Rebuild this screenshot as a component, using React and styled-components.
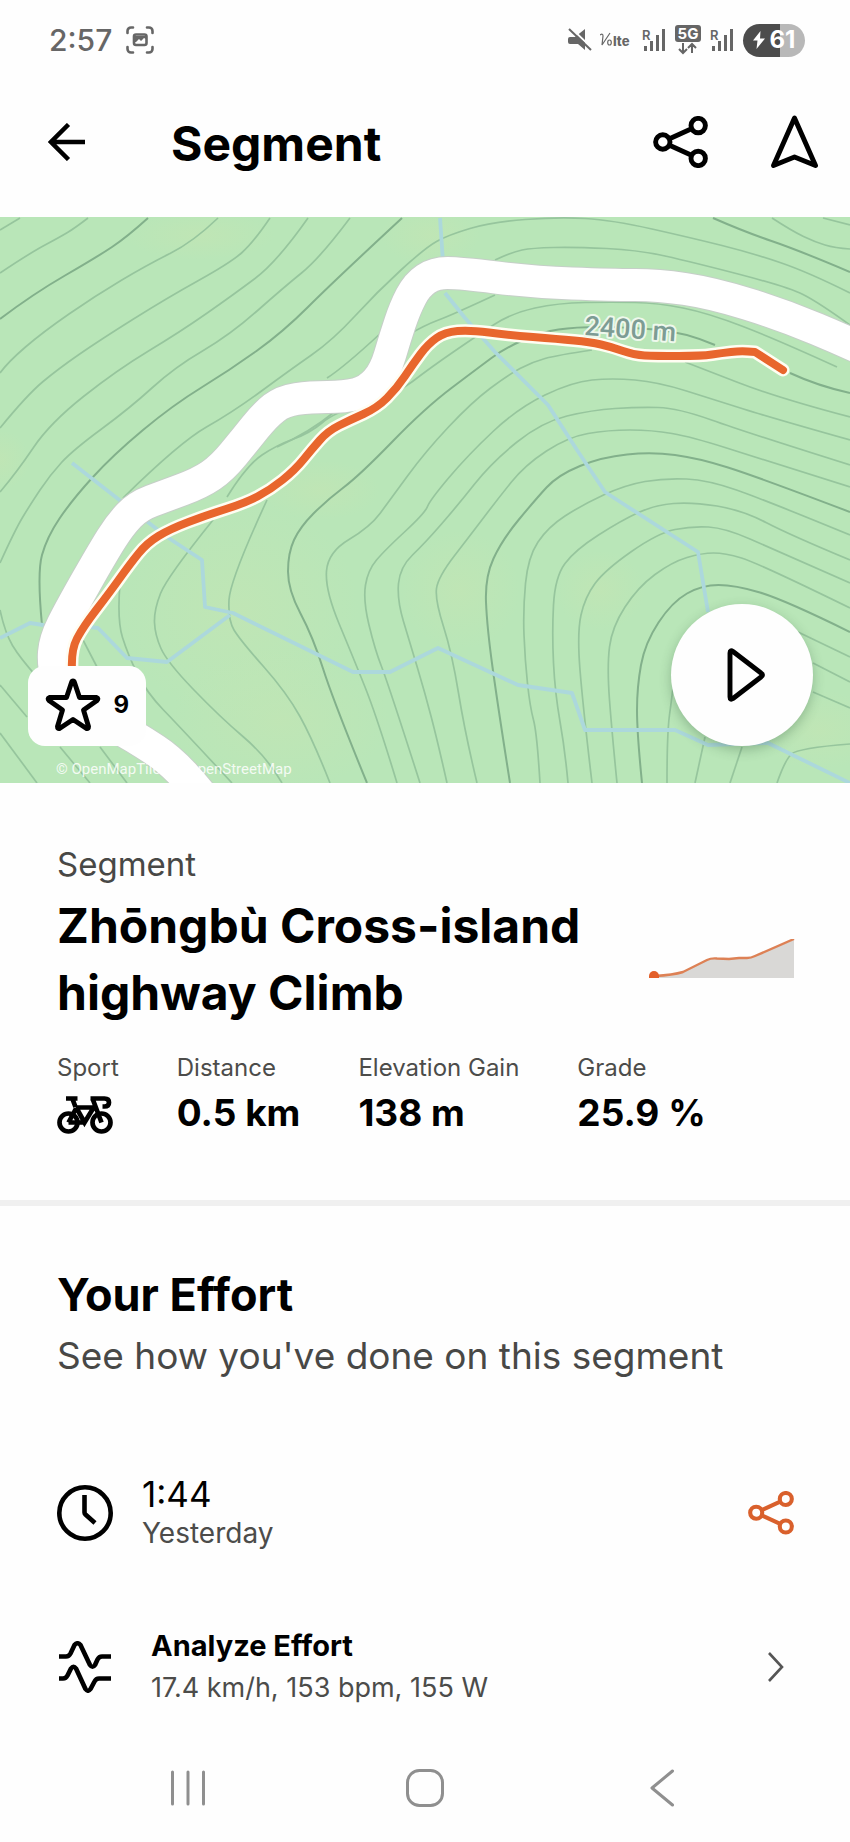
import React from "react";
import styled, { createGlobalStyle } from "styled-components";

const GlobalStyle = createGlobalStyle`
  * { box-sizing: border-box; }
  body {
    margin: 0;
    background: #fefefe;
    color: #000;
    font-family: Inter, "Liberation Sans", sans-serif;
  }
  h1, h2, p, dl, dd, dt { margin: 0; }
  svg { display: block; }
`;

const Screen = styled.div`
  min-height: 100vh;
  display: flex;
  flex-direction: column;
`;

/* Status bar */
const StatusBar = styled.div`
  height: 80px;
  padding: 0 45px 0 49px;
  display: flex;
  align-items: center;
  justify-content: space-between;
  color: #666;
`;
const StatusGroup = styled.div`
  display: flex;
  align-items: center;
  gap: ${(p) => p.$gap}px;
`;
const Clock = styled.span`
  font-size: 30px;
  line-height: 36px;
  font-weight: 500;
`;
const Battery = styled.span`
  width: 62px;
  height: 33px;
  border-radius: 17px;
  background: linear-gradient(90deg, #4c4c4c 60%, #b8b8b8 60%);
  color: #fff;
  display: flex;
  align-items: center;
  justify-content: center;
  gap: 5px;
  font-size: 24px;
  line-height: 32px;
  font-weight: 700;
`;

/* App header */
const Header = styled.header`
  height: 137px;
  padding: 0 31px 13px 48px;
  display: flex;
  align-items: center;
`;
const HeaderTitle = styled.h1`
  flex: 1;
  margin-left: 85px;
  padding-top: 4px;
  font-size: 48px;
  line-height: 60px;
  font-weight: 700;
`;
const IconButton = styled.button`
  border: 0;
  padding: 0;
  background: none;
  color: ${(p) => p.$color || "#000"};
  cursor: pointer;
  display: block;
  flex: none;
`;
const HeaderActions = styled.div`
  display: flex;
  align-items: center;
  gap: 62px;
`;

/* Map */
const MapPanel = styled.section`
  position: relative;
  aspect-ratio: 850 / 566;
  overflow: hidden;
  background: #b9e6b8;
`;
const MapDrawing = styled.svg`
  width: 100%;
  height: 100%;
`;
const StarBadge = styled.button`
  position: absolute;
  left: 28px;
  bottom: 37px;
  width: 118px;
  height: 80px;
  padding: 0 17px 2px;
  border: 0;
  border-radius: 17px;
  background: #fefefe;
  display: flex;
  align-items: center;
  justify-content: space-between;
  font: 700 24px/32px Inter, sans-serif;
  color: #000;
`;
const PlayButton = styled.button`
  position: absolute;
  right: 37px;
  bottom: 37px;
  width: 142px;
  height: 142px;
  padding: 0 0 0 8px;
  border: 0;
  border-radius: 50%;
  background: #fefefe;
  color: #000;
  box-shadow: 0 4px 12px rgba(40, 80, 50, 0.3);
  display: flex;
  align-items: center;
  justify-content: center;
`;
const Attribution = styled.small`
  position: absolute;
  left: 56px;
  bottom: 4px;
  font: 400 15px/20px Roboto, sans-serif;
  color: rgba(255, 255, 255, 0.85);
`;

/* Segment details */
const Details = styled.section`
  padding: 61px 55px 65px 57px;
  border-bottom: 6px solid #f0f0f0;
`;
const Kicker = styled.p`
  font-size: 33px;
  line-height: 40px;
  color: #484846;
`;
const TitleRow = styled.div`
  margin-top: 8px;
  display: flex;
  align-items: center;
  justify-content: space-between;
`;
const SegmentName = styled.h2`
  max-width: 560px;
  font-size: 48px;
  line-height: 67px;
  font-weight: 700;
`;
const Stats = styled.dl`
  margin-top: 27px;
  display: flex;
  gap: 58px;
`;
const StatLabel = styled.dt`
  font-size: 24px;
  line-height: 30px;
  color: #4c4c4a;
`;
const StatValue = styled.dd`
  margin-top: 8px;
  height: 44px;
  display: flex;
  align-items: center;
  font-size: 37px;
  line-height: 44px;
  font-weight: 700;
  white-space: pre;
`;

/* Effort */
const Effort = styled.section`
  flex: 1;
  padding: 63px 56px 24px 57px;
`;
const EffortTitle = styled.h2`
  font-size: 45px;
  line-height: 52px;
  font-weight: 700;
`;
const EffortLead = styled.p`
  margin-top: 12px;
  font-size: 37px;
  line-height: 46px;
  color: #484846;
`;
const Row = styled.div`
  margin-top: ${(p) => p.$top}px;
  display: flex;
  align-items: center;
  gap: ${(p) => p.$gap}px;
`;
const RowLink = styled(Row).attrs({ as: "a" })`
  color: inherit;
  text-decoration: none;
`;
const RowText = styled.div`
  flex: 1;
`;
const RowTime = styled.p`
  font-size: 35px;
  line-height: 40px;
`;
const RowDate = styled.p`
  font-size: 28px;
  line-height: 38px;
  color: #4c4c4a;
`;
const RowTitle = styled.p`
  font-size: 29px;
  line-height: 42px;
  font-weight: 700;
`;
const RowMeta = styled.p`
  font-size: 27px;
  line-height: 42px;
  color: #4c4c4a;
`;

/* System navigation */
const SystemNav = styled.nav`
  height: 108px;
  padding: 0 69px;
  display: grid;
  grid-template-columns: repeat(3, 1fr);
  place-items: center;
`;

const line = { fill: "none", stroke: "currentColor" };

const CaptureIcon = () => (
  <svg width="28" height="28" viewBox="0 0 28 28" {...line} strokeWidth="2.6" strokeLinecap="round" aria-hidden="true">
    <path d="M1.5 7V5a3.500 3.500 0 0 1 3.500-3.500h2M21 1.500h2a3.500 3.500 0 0 1 3.500 3.500v2M26.500 21v2a3.500 3.500 0 0 1-3.500 3.500h-2M7 26.500H5A3.500 3.500 0 0 1 1.500 23v-2" />
    <rect x="8" y="8.500" width="12.500" height="10.500" rx="2" />
    <path d="M8 10h12v3l-2-1-3 3-2-2-3 3H8z" fill="currentColor" stroke="none" />
  </svg>
);
const MuteIcon = () => (
  <svg width="24" height="24" viewBox="0 0 24 24" aria-hidden="true">
    <path d="M0 11q0-2 2-2h5l10-8v21l-7-6H2q-2 0-2-2z" fill="currentColor" />
    <path d="M3 0l22 21" stroke="#fefefe" strokeWidth="2" />
    <path d="M1 1l22 21" stroke="currentColor" strokeWidth="2" />
  </svg>
);
const VolteIcon = () => (
  <svg width="33" height="26" viewBox="0 0 33 26" fill="currentColor" aria-label="VoLTE" role="img">
    <path d="M0 8q3-2 3 1l-1 9L10 6" fill="none" stroke="currentColor" strokeWidth="1.200" />
    <ellipse cx="9.500" cy="15.500" rx="1.800" ry="2.500" fill="none" stroke="currentColor" strokeWidth="1.200" />
    <text x="13" y="19" fontFamily="Inter" fontWeight="800" fontSize="13">lte</text>
  </svg>
);
const SignalIcon = () => (
  <svg width="26" height="28" viewBox="0 0 26 28" fill="currentColor" role="img" aria-label="Roaming signal">
    <text x="1" y="14" fontFamily="Inter" fontWeight="600" fontSize="13">R</text>
    <rect x="3" y="20" width="3" height="5" />
    <rect x="9" y="15" width="3" height="10" />
    <rect x="15" y="9" width="3" height="16" />
    <rect x="21" y="3" width="3" height="22" />
  </svg>
);
const FiveGIcon = () => (
  <svg width="26" height="30" viewBox="0 0 26 30" role="img" aria-label="5G">
    <rect width="26" height="17" rx="3" fill="currentColor" />
    <text x="13" y="14" textAnchor="middle" fontFamily="Inter" fontWeight="700" fontSize="15" fill="#fff">5G</text>
    <path d="M8 18v10M4 24l4 4 4-4M17 28V19M13 23l4-4 4 4" {...line} strokeWidth="2" />
  </svg>
);
const BoltIcon = () => (
  <svg width="12" height="18" viewBox="0 0 12 18" aria-hidden="true">
    <path d="M7.500 0L0 9.500h4.500L3.500 18 12 7.500H7z" fill="currentColor" />
  </svg>
);
const BackIcon = () => (
  <svg width="38" height="38" viewBox="0 0 38 38" {...line} strokeWidth="4.500" aria-hidden="true">
    <path d="M37 19H3M20.500 1.500L3 19l17.500 17.500" />
  </svg>
);
const ShareIcon = ({ width }) => (
  <svg width={width} height={(width * 52) / 55} viewBox="0 0 55 52" {...line} strokeWidth="4.900" aria-hidden="true">
    <circle cx="9.800" cy="26" r="7.200" />
    <circle cx="45.200" cy="9.600" r="7.200" />
    <circle cx="45.200" cy="42.400" r="7.200" />
    <path d="M16.500 22.800l22-10M16.500 29.200l22 10" />
  </svg>
);
const LocateIcon = () => (
  <svg width="49" height="54" viewBox="0 0 49 54" {...line} strokeWidth="4.900" strokeLinejoin="round" aria-hidden="true">
    <path d="M24.500 3L45.500 50.500 24.500 42 3.500 50.500z" />
  </svg>
);
const StarIcon = () => (
  <svg width="56" height="54" viewBox="0 0 56 54" {...line} strokeWidth="4.900" strokeLinejoin="round" aria-hidden="true">
    <path d="M28 3q1 0 1.500 1.500L34.500 19.500h17q2.500 1 .5 3L38.500 32l5 16.500q0 2.500-2 2L28 41.500 14.500 50.500q-2 .5-2-2l5-16.500L4 22.500q-2-2 .5-3h17l5-15Q27 3 28 3z" />
  </svg>
);
const PlayIcon = () => (
  <svg width="38" height="54" viewBox="0 0 38 54" {...line} strokeWidth="4.900" strokeLinejoin="round" aria-hidden="true">
    <path d="M3 5q0-3.500 3-1.500L34 25q3 2 0 4L6 50.500Q3 52.500 3 49z" />
  </svg>
);
const BikeIcon = () => (
  <svg width="56" height="44" viewBox="0 0 56 44" {...line} strokeWidth="4.700" aria-hidden="true">
    <circle cx="11.500" cy="31.500" r="9" />
    <circle cx="44.500" cy="31.500" r="9" />
    <path d="M9 7.500h11.500M15.500 8l3 8M11.500 31.500l7.500-14M18.500 16.500h18M19.500 17L27.500 31.500 37 16M11.500 31.500h16M35.500 7.500L44.500 31.500M33.500 7.500h14q4.500 0 4.500 4t-4.500 4h-2" />
  </svg>
);
const ClockIcon = () => (
  <svg width="56" height="56" viewBox="0 0 56 56" {...line} strokeWidth="4.600" aria-hidden="true">
    <circle cx="28" cy="28" r="25.700" />
    <path d="M27.500 10v17.500q0 1 1 2L38 38" />
  </svg>
);
const AnalyzeIcon = () => (
  <svg width="56" height="52" viewBox="0 0 56 52" {...line} strokeWidth="4.600" aria-hidden="true">
    <path d="M2 15.500h7q3 0 4.500-3l4-8.500q3-3.500 6 0l9.500 20q2.500 3.500 5 0l2.500-5.500q1.500-3 4.500-3h9" />
    <path d="M2 37.500h4q3 0 4.500-3l3.500-7q2.500-3.500 5 0l9.500 20.500q2.500 3.500 5 0L37.500 40.500q1.500-3 4.500-3h12" />
  </svg>
);
const ChevronIcon = () => (
  <svg width="28" height="30" viewBox="0 0 28 30" fill="none" stroke="#555" strokeWidth="2.600" aria-hidden="true">
    <path d="M3 1l13 14L3 29" />
  </svg>
);
const RecentsIcon = () => (
  <svg width="36" height="36" viewBox="0 0 36 36" stroke="#8f8f8f" strokeWidth="3" strokeLinecap="round" aria-hidden="true">
    <path d="M2.500 2v32M18 2v32M33.500 2v32" />
  </svg>
);
const HomeIcon = () => (
  <svg width="38" height="38" viewBox="0 0 38 38" fill="none" stroke="#8f8f8f" strokeWidth="3" aria-hidden="true">
    <rect x="1.500" y="1.500" width="35" height="35" rx="12" />
  </svg>
);
const NavBackIcon = () => (
  <svg width="24" height="38" viewBox="0 0 24 38" fill="none" stroke="#8f8f8f" strokeWidth="3" strokeLinecap="round" strokeLinejoin="round" aria-hidden="true">
    <path d="M22.500 2L2 19l20.500 17" />
  </svg>
);

/* Polyline points turned into a smooth path through segment midpoints. */
const smooth = (points) => {
  const p = points.split(" ").map((s) => s.split(",").map(Number));
  if (p.length === 2) return `M${p[0]}L${p[1]}`;
  let d = `M${p[0]}`;
  for (let i = 1; i < p.length - 1; i++) {
    const last = i === p.length - 2;
    const end = last ? p[i + 1] : [(p[i][0] + p[i + 1][0]) / 2, (p[i][1] + p[i + 1][1]) / 2];
    d += `Q${p[i]} ${end}`;
  }
  return d;
};

const minorContours = [
  "0,230 10,224 20,218",
  "0,273 30,253 60,237 75,228 88,218",
  "0,373 8,362 43,332 95,296 147,265 193,242 218,218",
  "0,428 27,395 58,369 100,340 167,298 230,263 253,243 270,218",
  "0,492 17,472 50,423 117,370 180,332 233,295 277,262 308,218",
  "0,563 15,530 30,505 50,475 73,450 130,408 175,367 230,335 283,288 320,258 350,218",
  "123,498 180,442 233,412 290,370 333,340 377,292 425,248 448,235 492,222 558,217 612,220 692,238 752,253 808,272 850,293",
  "327,378 343,368 382,332",
  "495,260 512,252 532,248 575,247 638,250 692,262 788,287 818,302 850,325",
  "772,218 792,231 815,242 835,248 850,249",
  "823,218 850,225",
  "408,335 425,325 452,315 495,295",
  "227,497 247,465 277,445 310,433 335,412 395,395 430,368 478,335 512,313 558,303 612,302 658,303 708,313 778,340 837,367",
  "397,783 377,717 353,657 325,590 328,552 370,527 390,500 425,452 472,402 508,375 532,362 558,355 592,350",
  "685,362 698,367 778,398 850,417",
  "420,783 388,683 375,650 363,600 368,570 385,550 425,513 430,500 468,455 518,408 572,382 612,378 658,382 715,400 772,418 850,440",
  "447,783 438,743 425,693 410,643 397,600 400,567 425,543 458,505 492,462 542,422 592,410 638,407 678,408 745,432 850,465",
  "477,783 465,733 452,653 435,600 438,577 472,533 497,500 525,465 568,437 608,430 652,430 692,437 758,458 850,487",
  "540,783 537,733 530,707 525,660 523,610 528,557 548,527 582,505 625,485 665,478 708,480 765,500 850,535",
  "568,783 565,750 555,693 552,633 555,577 575,550 622,520 655,505 692,502 742,510 790,535 850,560",
  "592,783 583,707 577,633 585,597 605,570 658,533 692,526 725,528 775,550 850,583",
  "617,783 612,733 607,667 612,627 638,587 672,562 702,553 725,553 758,563 850,608",
  "667,783 667,733 672,697 675,670",
  "798,632 850,657",
  "695,783 705,737",
  "813,663 850,682",
  "730,783 742,747",
  "813,692 850,708",
  "777,783 785,760 798,748 850,744",
  "0,610 5,633 20,658 37,677",
  "0,685 27,717",
  "60,747 90,783",
  "0,733 37,783",
  "100,747 127,783",
  "330,783 313,740 287,693 240,640 228,620 230,580 267,500",
  "282,783 267,757 220,717 167,662 155,635 154,610 167,577 213,520",
  "120,583 117,620 128,655 147,693 180,727 232,783",
  "83,640 97,667",
  "277,447 310,432 333,413",
];
const majorContours = [
  "0,319 33,294 97,257 127,237 148,218",
  "42,625 37,573 47,537 72,500 113,455 173,405 230,370 283,332 333,282 402,218",
  "713,218 745,232 798,250 850,272",
  "367,783 333,700 313,637 288,590 288,553 300,527 327,500 360,475 425,408 478,368 505,348 542,332 575,327 625,327 685,332 715,345",
  "790,373 818,386 850,393",
  "510,783 498,707 487,627 485,577 502,540 535,500 558,475 602,457 652,452 698,458 758,477 850,512",
  "642,783 637,733 637,687 645,643 672,602 702,585 735,585 785,600 850,632",
];
const water = [
  "440,218 443,262",
  "445,293 465,318 495,352 548,405 577,450 605,492 625,505 698,552 708,612",
  "72,463 122,502 167,537 202,560 205,607 233,613 353,672 390,672 438,648 518,685 572,693 585,730 675,730 708,745 768,743 850,783",
  "230,615 167,662 127,658 98,628 90,627 43,625 30,623 0,638",
];
const road = smooth(
  "205,800 178,765 132,735 100,718 62,698 53,665 55,640 70,610 103,552 120,525 138,506 165,496 200,483 222,468 245,440 265,415 283,401 310,397 345,397 368,391 385,372 395,338 405,308 417,285 435,273 460,273 532,282 612,285 658,285 712,293 783,315 850,343 880,357"
);
const route = smooth(
  "72,670 71,650 83,627 110,592 130,564 147,543 170,529 207,515 245,503 270,490 295,470 312,449 328,431 350,420 377,408 397,388 413,364 428,344 445,332 470,330 508,335 558,339 590,342 612,347 634,355 655,356 702,356 722,353 740,351 755,352 755,352 783,370"
);

const TrailMap = () => (
  <MapDrawing viewBox="0 217 850 566" preserveAspectRatio="xMidYMid slice" role="img" aria-label="Map of the segment route">
    <defs>
      <radialGradient id="meadow">
        <stop offset="0" stopColor="#c6e5b2" stopOpacity=".5" />
        <stop offset="1" stopColor="#c6e5b2" stopOpacity="0" />
      </radialGradient>
    </defs>
    <g fill="url(#meadow)">
      <ellipse cx="200" cy="235" rx="75" ry="25" />
      <ellipse cx="430" cy="235" rx="50" ry="30" />
      <ellipse cx="0" cy="460" rx="30" ry="30" />
      <ellipse cx="240" cy="610" rx="120" ry="110" />
      <ellipse cx="280" cy="720" rx="110" ry="70" />
      <ellipse cx="460" cy="590" rx="60" ry="60" />
      <ellipse cx="320" cy="490" rx="60" ry="30" />
      <ellipse cx="600" cy="590" rx="45" ry="40" />
      <ellipse cx="820" cy="730" rx="60" ry="40" />
    </g>
    <g fill="none" stroke="#96c59d" strokeWidth="1.700">
      {minorContours.map((c) => <path key={c} d={smooth(c)} />)}
    </g>
    <g fill="none" stroke="#82b08b" strokeWidth="2">
      {majorContours.map((c) => <path key={c} d={smooth(c)} />)}
    </g>
    <g fill="none" stroke="#acd8dc" strokeWidth="3.800" strokeLinejoin="round">
      {water.map((w) => <polyline key={w} points={w} />)}
    </g>
    <g fill="none" strokeLinejoin="round">
      <path d={road} stroke="#c6cfc8" strokeWidth="34" />
      <path d={road} stroke="#fff" strokeWidth="32" />
      <path d={route} stroke="#fffdf2" strokeWidth="13" strokeLinecap="round" />
      <path d={route} stroke="#e8662d" strokeWidth="8" strokeLinecap="round" />
    </g>
    <text
      x="584" y="335" transform="rotate(4 584 335)"
      fontFamily="Roboto" fontSize="27" fontWeight="500"
      fill="#7d9c94" stroke="#eef8ec" strokeWidth="4" strokeLinejoin="round" paintOrder="stroke"
    >
      2400 m
    </text>
  </MapDrawing>
);

const ElevationChart = () => (
  <svg width="146" height="40" viewBox="0 0 146 40" role="img" aria-label="Elevation profile">
    <path d="M6 38L20 36 34 33 62 19Q80 20 100 19L145 1V39H6z" fill="#d9d8d6" />
    <path d="M6 37Q24 36 34 33L58 21Q62 19 68 19.500L80 20 90 19H98Q102 19 106 17L145 0" fill="none" stroke="#dd8155" strokeWidth="2.400" />
    <path d="M0 39V37A5 5 0 0 1 10 37V39z" fill="#e3602a" />
  </svg>
);

const stats = [
  { label: "Sport", value: <BikeIcon /> },
  { label: "Distance", value: "0.5 km" },
  { label: "Elevation Gain", value: "138 m" },
  { label: "Grade", value: "25.9 %" },
];

export default function App() {
  return (
    <Screen>
      <GlobalStyle />
      <StatusBar>
        <StatusGroup $gap={14}>
          <Clock>2:57</Clock>
          <CaptureIcon />
        </StatusGroup>
        <StatusGroup $gap={8}>
          <MuteIcon />
          <VolteIcon />
          <SignalIcon />
          <FiveGIcon />
          <SignalIcon />
          <Battery><BoltIcon />61</Battery>
        </StatusGroup>
      </StatusBar>

      <Header>
        <IconButton aria-label="Back"><BackIcon /></IconButton>
        <HeaderTitle>Segment</HeaderTitle>
        <HeaderActions>
          <IconButton aria-label="Share segment"><ShareIcon width={55} /></IconButton>
          <IconButton aria-label="Navigate"><LocateIcon /></IconButton>
        </HeaderActions>
      </Header>

      <MapPanel>
        <TrailMap />
        <Attribution>© OpenMapTiles © OpenStreetMap</Attribution>
        <StarBadge aria-label="Star segment, 9 stars"><StarIcon />9</StarBadge>
        <PlayButton aria-label="Play"><PlayIcon /></PlayButton>
      </MapPanel>

      <Details>
        <Kicker>Segment</Kicker>
        <TitleRow>
          <SegmentName>Zhōngbù Cross-island highway Climb</SegmentName>
          <ElevationChart />
        </TitleRow>
        <Stats>
          {stats.map((s) => (
            <div key={s.label}>
              <StatLabel>{s.label}</StatLabel>
              <StatValue>{s.value}</StatValue>
            </div>
          ))}
        </Stats>
      </Details>

      <Effort>
        <EffortTitle>Your Effort</EffortTitle>
        <EffortLead>See how you've done on this segment</EffortLead>
        <Row $top={95} $gap={29}>
          <ClockIcon />
          <RowText>
            <RowTime>1:44</RowTime>
            <RowDate>Yesterday</RowDate>
          </RowText>
          <IconButton $color="#d9602c" aria-label="Share effort"><ShareIcon width={46} /></IconButton>
        </Row>
        <RowLink href="#analyze" $top={73} $gap={38}>
          <AnalyzeIcon />
          <RowText>
            <RowTitle>Analyze Effort</RowTitle>
            <RowMeta>17.4 km/h, 153 bpm, 155 W</RowMeta>
          </RowText>
          <ChevronIcon />
        </RowLink>
      </Effort>

      <SystemNav aria-label="System">
        <IconButton aria-label="Recent apps"><RecentsIcon /></IconButton>
        <IconButton aria-label="Home"><HomeIcon /></IconButton>
        <IconButton aria-label="Back to previous app"><NavBackIcon /></IconButton>
      </SystemNav>
    </Screen>
  );
}
